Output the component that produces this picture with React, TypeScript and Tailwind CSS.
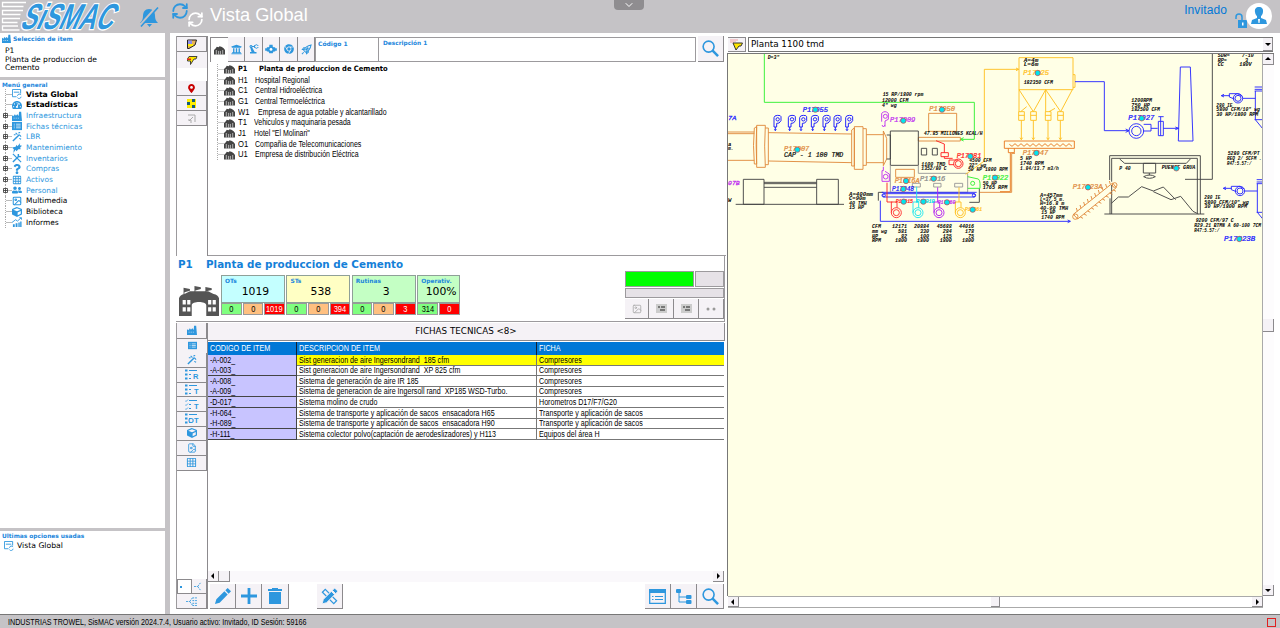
import React from "react";
import { FaUniversity, FaChrome, FaMapMarkerAlt, FaTachometerAlt, FaQuestion, FaUserFriends, FaCube } from "react-icons/fa";
import { MdPrecisionManufacturing, MdOutlineGridOn } from "react-icons/md";
import { RefreshCw, FileImage, Image as ImageIcon, ChevronDown } from "lucide-react";

const Factory = ({ className = "" }: { className?: string }) => (
  <svg viewBox="0 0 44 34" className={className} fill="currentColor" preserveAspectRatio="none">
    <path d="M0 34V14Q1 10 6 9L12 6H32L38 9q5 1 6 5v20H30V22c0-5-16-5-16 0v12z" />
    <path d="M5 2l7 1.500v2L6 7v3H5zM17 0l7 1.500v2L18 5v3h-1zM29 1l7 1.500v2L30 6v3h-1z" />
    <path fill="#fff" d="M4 16h3.500v5H4zM9 16h3.500v5H9zM4 24h3.500v5H4zM9 24h3.500v5H9zM32 16h3.500v5H32zM37 16h3.500v5H37zM32 24h3.500v5H32zM37 24h3.500v5H37z" />
  </svg>
);

const Building = () => (
  <svg viewBox="0 0 12 10" className="h-[10px] w-[11px] shrink-0">
    <path d="M0 10V5l2-2 1-1.500L5 2l1-1 2 .5L9 2l1.500 1L12 5v5z" fill="#444" />
    <path d="M2.500 5v5M5 6v4M7 6v4M9.500 5v5" stroke="#d8d8d8" strokeWidth=".8" />
  </svg>
);

const Plant = ({ className = "" }: { className?: string }) => (
  <svg viewBox="0 0 12 12" className={className} fill="currentColor">
    <path d="M0 12V6l1-1 1.500 1.500V5l1-1L5 6V5l1.500-1L8 6l.5-5H11l1 11z" />
    <path d="M2 8h1v1H2zM4.500 8h1v1h-1zM7 8h1v1H7z" fill="#fff" />
  </svg>
);

const Sheet = ({ className = "size-[10px]" }: { className?: string }) => (
  <svg viewBox="0 0 11 11" className={className}>
    <path d="M0 1h11v9H0z" fill="#2e97de" />
    <path d="M2 3.500h1M4.500 3.500h5M2 5.500h1M4.500 5.500h5M2 7.500h1M4.500 7.500h5" stroke="#fff" strokeWidth=".8" />
  </svg>
);

const Wand = () => (
  <svg viewBox="0 0 11 11" className="size-[10px]" stroke="#2e97de" fill="none">
    <path d="M1 10l7-7" strokeWidth="1.600" />
    <path d="M4 1l2 2M8 3l2 2M7 1l2-.5M2 3h2M8 7l2 1" strokeWidth="1.200" />
  </svg>
);

const Rocket = ({ className = "size-[11px]" }: { className?: string }) => (
  <svg viewBox="0 0 12 12" className={className} fill="none" stroke="#2e97de">
    <path d="M3 7q2-5 8-6-1 6-6 8zM3.500 6L1.500 6 3 4h2M6 8.500v2l2-1.500V7M3 9l-2 2" strokeWidth="1.100" />
    <path d="M5 7l3-3" strokeWidth="1.800" />
  </svg>
);

const Cross = () => (
  <svg viewBox="0 0 11 11" className="size-[10px]" stroke="#2e97de" fill="none">
    <path d="M1 1l9 9" strokeWidth="1.300" />
    <path d="M1 10l7-7M7 1v3h3" strokeWidth="1.600" />
  </svg>
);

const Wrench = () => (
  <svg viewBox="0 0 11 11" className="size-[10px]" fill="#2e97de">
    <path d="M0 5l4-1 1-2 1 1.500L9 0l-.5 2.500L11 3 9 5l.5 2L7 7 5 9 4 7.500 1.500 11 2 7z" />
  </svg>
);

const Report = () => (
  <svg viewBox="0 0 11 11" className="size-[10px]" fill="#2e97de">
    <path d="M1 8h2v3H1zM4 7h2v4H4zM7 6h1.500v5H7zM9 5h1.500v6H9z" />
    <path d="M0 6l4-3 2 1.500L10 1M8 .8h2.500V3" fill="none" stroke="#2e97de" />
  </svg>
);

const Glass = () => (
  <svg viewBox="0 0 18 18" className="size-[17px]" fill="none" stroke="#2e97de">
    <circle cx="7" cy="7" r="5.800" strokeWidth="1.700" />
    <path d="M11 11l6 6" strokeWidth="2.600" />
  </svg>
);

const Flags = ({ color }: { color: "yellow" | "mixed" }) => (
  <svg viewBox="0 0 12 10" className="h-[10px] w-3">
    {color === "mixed" ? (
      <g>
        <path d="M1.500 1h9L9 6 3 9.500H1.500z" fill="#e8b35a" stroke="#222" />
        <path d="M2 1.500h4V5H2z" fill="#8f8fe8" />
        <path d="M2 5h5v2H2z" fill="#ffee00" />
      </g>
    ) : (
      <g>
        <path d="M3 1.500h8L10 4H8L4.500 9.500V6H1.500V4z" fill="#ffe600" stroke="#333" strokeWidth=".9" />
        <path d="M1 3.500h4v1.500H1z" fill="#e02020" />
      </g>
    )}
  </svg>
);

const Pennant = () => (
  <svg viewBox="0 0 14 12" className="h-3 w-[14px]">
    <path d="M1 0v4M3 0v4M5 0v3M7 0v2" stroke="#f08080" strokeWidth=".7" />
    <path d="M3 4h9.500L11 7H9l-3 4z" fill="#ffe600" stroke="#333" />
  </svg>
);

const Arm = ({ className = "" }: { className?: string }) => (
  <svg viewBox="0 0 14 12" className={className} fill="currentColor">
    <path d="M0 5h2V4h2l1-1V1h4v2l1 1h2v1h2v3h-2v1h-2L9 11H5L4 9H2V8H0z" />
    <circle cx="7" cy="6.500" r="1.700" fill="#fff" />
  </svg>
);

const Dots = ({ letter = "", check = false }: { letter?: string; check?: boolean }) => (
  <svg viewBox="0 0 14 11" className="h-[11px] w-[14px]">
    <g stroke="#2e97de" fill="none">
      <path d="M4 1.500h8M4 5.500h2M4 9.500h2" />
      <path d={check ? "M0 1.500l1 1 2-2M0 5.500l1 1 2-2M0 9.500l1 1 2-2" : "M0 1.500h2.500M0 5.500h2.500M0 9.500h2.500"} strokeWidth={check ? 0.8 : 2} />
    </g>
    <text x="13.500" y="10" textAnchor="end" fontSize="7.500" fontWeight="bold" fontFamily="Liberation Sans" fill="#2e97de">{letter}</text>
  </svg>
);

const Btn = ({ children, className = "" }: { children?: React.ReactNode; className?: string }) => (
  <div className={"flex shrink-0 items-center justify-center border-r border-b border-[#8c8a8d] bg-[#f5f2f6] text-[#2e97de] " + className}>{children}</div>
);

function Monitor() {
  return (
    <svg viewBox="0 0 11 11" className="size-[10px]" fill="none" stroke="#2e97de">
      <path d="M5 8.500H.5v-8h9V5M2 3.500h6" />
      <path d="M6 7.500a2.200 2.200 0 0 1 4-1M10 8.500a2.200 2.200 0 0 1-4 1" />
    </svg>
  );
}

const menu: [string, React.ReactNode, number][] = [
  ["Vista Global", <Monitor key="a" />, 2],
  ["Estadísticas", <FaTachometerAlt key="b" />, 2],
  ["Infraestructura", <Plant key="c" className="size-[10px]" />, 1],
  ["Fichas técnicas", <Sheet key="d" />, 1],
  ["LBR", <Wand key="e" />, 1],
  ["Mantenimiento", <Wrench key="f" />, 1],
  ["Inventarios", <Cross key="g" />, 1],
  ["Compras", <FaQuestion key="h" />, 1],
  ["Activos", <MdOutlineGridOn key="i" />, 1],
  ["Personal", <FaUserFriends key="j" />, 1],
  ["Multimedia", <ImageIcon key="k" className="size-[10px]" strokeWidth={2.5} />, 0],
  ["Biblioteca", <FaCube key="l" />, 0],
  ["Informes", <Report key="m" />, 0],
];

const sites: [string, string, string][] = [
  ["P1", "Planta de produccion de Cemento", "w-[20.500px]"],
  ["H1", "Hospital Regional", "w-[17px]"],
  ["C1", "Central Hidroeléctrica", "w-[16.500px]"],
  ["G1", "Central Termoeléctrica", "w-[17px]"],
  ["W1", "Empresa de agua potable y alcantarillado", "w-[20px]"],
  ["T1", "Vehiculos y maquinaria pesada", "w-[16px]"],
  ["J1", "Hotel \"El Molinari\"", "w-[15.500px]"],
  ["O1", "Compañia de Telecomunicaciones", "w-[17px]"],
  ["U1", "Empresa de distribución Eléctrica", "w-[17px]"],
];

const rows = [
  ["-A-002_", "Sist generacion de aire Ingersondrand  185 cfm", "Compresores"],
  ["-A-003_", "Sist generacion de aire Ingersondrand  XP 825 cfm", "Compresores"],
  ["-A-008_", "Sistema de generación de aire IR 185", "Compresores"],
  ["-A-009_", "Sistema de generacion de aire Ingersoll rand  XP185 WSD-Turbo.", "Compresores"],
  ["-D-017_", "Sistema molino de crudo", "Horometros D17/F7/G20"],
  ["-H-064_", "Sistema de transporte y aplicación de sacos  ensacadora H65", "Transporte y aplicación de sacos"],
  ["-H-089_", "Sistema de transporte y aplicación de sacos  ensacadora H90", "Transporte y aplicación de sacos"],
  ["-H-111_", "Sistema colector polvo(captación de aerodeslizadores) y H113", "Equipos del área H"],
];

const cards: [string, string, string, string[], string][] = [
  ["OTs", "1019", "bg-[#c4ffff]", ["0", "0", "1019"], "w-[64px]"],
  ["STs", "538", "bg-[#ffffc4]", ["0", "0", "394"], "w-[64px]"],
  ["Rutinas", "3", "bg-[#c4ffc4]", ["0", "0", "3"], "w-[64px]"],
  ["Operativ.", "100%", "bg-[#c4ffc4]", ["314", "0"], "w-[43px]"],
];

const Note = ({ x, y, w, s = 15.5, c = "#000", t }: { x: number; y: number; w: number; s?: number; c?: string; t: string }) => (
  <text x={x} y={y} fontSize={s} fontStyle="italic" fontWeight="bold" textLength={w} lengthAdjust="spacingAndGlyphs" fill={c} className="whitespace-pre">{t}</text>
);

const Tag = ({ x, y, w, s = 19, c, t, px, py }: { x: number; y: number; w: number; s?: number; c: string; t: string; px: number; py: number }) => (
  <g>
    <text x={x} y={y} fontSize={s} fontStyle="italic" textLength={w} lengthAdjust="spacingAndGlyphs" fill={c} stroke={c} strokeWidth=".7">{t}</text>
    <circle cx={px} cy={py} r="8" fill="#00e5ee" stroke="#d83a3a" strokeWidth="2" />
  </g>
);

const Burner = ({ x }: { x: number }) => (
  <g stroke="#1414ff" fill="none">
    <circle cx={x + 3} cy="268" r="5" />
    <path d={`M${x - 8} 291v-28q1-7 11-7t10 4v12q-5 10-13 8v11zM${x - 4} 291v10M${x - 7} 298l3 4 3-4`} />
  </g>
);

const Fan = ({ x, c, top }: { x: number; c: string; top: number }) => (
  <g stroke={c} fill="none">
    <circle cx={x} cy="548" r="15" />
    <circle cx={x} cy="548" r="9" />
    <path d={`M${x - 15} 548v-32h17v17M${x - 4} 516V${top}`} />
  </g>
);

function Diagram() {
  const o = "#e08a3c";
  const y = "#ffc020";
  const b = "#2828ff";
  return (
    <svg viewBox="9 72 1602 1626" className="block h-[542px] w-[534px]" fontFamily="Liberation Mono, monospace" fill="none" strokeWidth="2.800">
      <path d="M118 72V217H748V328H706" stroke="#30f030" />
      <path d="M716 323l-10 5 10 5" stroke="#30f030" />
      <g stroke={o}>
        <path d="M9 306H88M9 311H88M9 391H88M130 308L380 312M130 393L380 398M424 314H475M424 398H475" />
        <path d="M88 294q-5 50 0 108h7q-3-60 0-112zM95 286h26q-4 62 0 126H95zM121 294h9v110h-9M380 300v108h8V294zM388 290h26v128h-26zM414 296h10v110h-10M475 303v104l10-20v-62z" />
        <path d="M611 250h84v54h-84zM580 322h126v11H580zM512 418h56v24h-56z" />
        <path d="M765 487h95V370h10" />
      </g>
      {[155, 198, 232, 267, 302, 335, 370].map((v) => <Burner key={v} x={v} />)}
      <g stroke="#444">
        <path d="M55 448h62v75H55zM275 448h65v75h-65zM117 457h158M117 461h158M117 472h158M32 523h325" />
        <path d="M496 303h84v103h-84zM485 315h11v72h-11M589 355h16v20h-16zM622 355h15v20h-15z" />
        <path d="M460 512V487h15M763 475v42h-30" />
      </g>
      <path d="M496 406v81h232v-57H580v-24M562 460h24v11h-24zM626 460h22v11h-22zM689 460h24v11h-24z" stroke="#999" />
      <g stroke="#c030f0">
        <circle cx="481" cy="259" r="6" /><path d="M470 275v-25q10-10 20 0v18l-10 5v17M471 285l4 6 5-6M475 410v12h-4v32h22v-22l-13-8" /><circle cx="482" cy="440" r="7" />
      </g>
      <path d="M633 332l25 10v26M648 368h22v12h-22zM658 380v5h25" stroke="#ff2020" />
      <circle cx="700" cy="401" r="14" stroke="#ff2020" /><circle cx="700" cy="401" r="9" stroke="#ff2020" /><path d="M672 390h28M672 390v14h15" stroke="#ff2020" />
      <path d="M728 440l32 7q5 4 5 13v15h-37" stroke="#30f030" /><circle cx="743" cy="460" r="6" stroke="#30f030" />
      <path d="M476 491h272q6 5 0 10H476q-6-5 0-10M470 487h285M466 512v62h570M1028 570l8 4-8 4" stroke={b} />
      <circle cx="476" cy="496" r="5" stroke={b} /><circle cx="747" cy="496" r="5" stroke={b} />
      <path d="M486 458v58h16" stroke="#ff2020" />
      <Fan x={514} c="#ff3030" top={516} />
      <Fan x={579} c="#20e5ee" top={470} />
      <Fan x={642} c="#b020f0" top={472} />
      <Fan x={706} c="#ffc020" top={472} />
      <path d="M722 433l56-40V118h103M873 114l8 4-8 4" stroke={y} />

      <Note x={128} y={88} w={35} t="D=3&quot;" />
      <Note x={473} y={197} w={122} t="15 RP/1800 rpm" /><Note x={471} y={217} w={79} t="12000 CFM" /><Note x={471} y={231} w={44} t='4" wg' />
      <Note x={597} y={316} w={176} t="47.85 MILLONES KCAL/H" />
      <Note x={589} y={407} w={72} t="1100 TMD" /><Note x={589} y={421} w={76} t="1352/80 C" />
      <Note x={733} y={395} w={67} t="4500 CFM" /><Note x={731} y={410} w={53} t='32" wg' /><Note x={729} y={424} w={119} t="50 HP 1800 RPM" />
      <Note x={773} y={464} w={43} t="50 HP" /><Note x={773} y={478} w={74} t="1765 RPM" />
      <Note x={372} y={497} w={72} t="A=400mm" /><Note x={372} y={510} w={50} t="C=90m" /><Note x={372} y={524} w={53} t="40 TMH" /><Note x={372} y={538} w={45} t="15 HP" />
      <text x="177" y="382" fontSize="19" fontStyle="italic" fill="#000" stroke="#000" strokeWidth=".5" textLength="178" lengthAdjust="spacingAndGlyphs">CAP - 1 100 TMD</text>
      <Note x={9} y={348} w={10} t="a" /><Note x={9} y={361} w={17} t="m." /><Note x={9} y={515} w={10} t="W" />
      <text x="9" y="269" fontSize="18" fontStyle="italic" fill={b} stroke={b} strokeWidth=".8" textLength="25" lengthAdjust="spacingAndGlyphs">7A</text>
      <text x="9" y="466" fontSize="18" fontStyle="italic" fill="#c030f0" stroke="#c030f0" strokeWidth=".8" textLength="35" lengthAdjust="spacingAndGlyphs">07B</text>
      {[["CFM", "12171", "20884", "45688", "44016"], ["mm wg", "581", "330", "284", "178"], ["HP", "82", "100", "125", "75"], ["RPM", "1800", "1800", "1800", "1800"]].map((r, i) => (
        <g key={r[0]} fontSize="15" fontWeight="bold" fontStyle="italic" fill="#000">
          <text x="441" y={595 + i * 14}>{r[0]}</text>
          {r.slice(1).map((v, j) => <text key={j} x={[546, 612, 680, 747][j]} y={595 + i * 14} textAnchor="end">{v}</text>)}
        </g>
      ))}
      <Tag x={233} y={247} w={76} c="#1414ff" t="P17055" px={271} py={239} />
      <Tag x={177} y={363} w={76} c={o} t="P17007" px={217} py={359} />
      <Tag x={495} y={275} w={76} c="#c030f0" t="P17009" px={535} py={272} />
      <Tag x={613} y={242} w={77} c={o} t="P17050" px={651} py={239} />
      <Tag x={695} y={384} w={74} c="#ff2020" t="P17081" px={736} py={379} />
      <Tag x={585} y={453} w={76} c="#888" t="P17016" px={626} py={446} />
      <Tag x={509} y={459} w={75} c={o} t="P1716A" px={543} py={453} />
      <Tag x={501} y={483} w={66} c="#1414ff" t="P17048" px={535} py={477} />
      <Tag x={773} y={449} w={77} c="#30f030" t="P17022" px={810} py={443} />
      <Tag x={512} y={519} w={52} s={14} c="#ff2020" t="P17015" px={536} py={515} />
      <Tag x={574} y={519} w={55} s={14} c="#00dce8" t="P17010" px={595} py={515} />
      <Tag x={638} y={521} w={53} s={14} c="#c030f0" t="P17060" px={666} py={517} />
      <Tag x={720} y={543} w={51} s={14} c={y} t="P17061" px={743} py={539} />

      <g transform="translate(825 0)">
        <g stroke={y}>
          <path d="M57 83h162v96H57zM219 134h6v38h-6M57 179v66M57 179l43 66 37-66 45 66 35-66M80 230l-18 15M165 235l-18 10M137 179v66" />
          {[64, 100, 144, 181].map((v) => <path key={v} d={`M${v - 8} 245h17v26h-17zM${v - 8} 256h17M${v} 271v58M${v - 4} 323l4 6 4-6`} />)}
        </g>
        <path d="M13 333h210v22H13zM25 355v13h6v117H0M43 355v13H31M28 343l8 6 9-8 9 8 9-8 9 8 9-8 9 8 9-8 9 8 9-8 9 8 9-8 9 8 9-8 9 8 9-8 9 8 9-8 9 8 9-8 9 8" stroke="#e87a20" />
        <g stroke={b}>
          <path d="M225 155h88v147h74M377 297l10 5-10 5M431 283h22v20h-24M453 295h20M475 274h15v43h-15zM482 260v57M475 260h16M490 295h46M526 291l10 4-10 4M541 111h30l8 222h-44z" />
          <circle cx="409" cy="303" r="22" /><circle cx="409" cy="303" r="14" />
        </g>
        <g stroke="#444">
          <path d="M637 72V448h-82M329 450v-73h272v175M335 455v-70h257v165M335 465v87M313 552h300M359 387l15 13h185l12-13M430 400h37v29h-37zM448 429v7M431 440q18-10 35 0-18 10-35 0" />
          <path d="M334 520l21-19h30l40-31 35 13 30-12 37 38M460 485l53 24 29-10 37 45 16 8M330 505v47" />
        </g>
        <g stroke={o}>
          <path d="M220 553L338 459l11 14L233 567z" /><circle cx="226" cy="560" r="8" /><circle cx="344" cy="465" r="7" />
          {Array.from({ length: 10 }, (_, i) => <path key={i} d={`M${232 + i * 11} ${544 - i * 9}l-3-10M${241 + i * 11} ${561 - i * 9}l8 4`} />)}
        </g>
        {[[0, 0], [6, 278]].map(([dx, dy]) => (
          <g key={dy} transform={`translate(${dx} ${dy})`} stroke={b}>
            <path d="M664 197h25M672 193l-8 4 8 4M688 191h25l14 8M688 191v10l15 6M728 205h38M764 171h25M764 178h25M766 183v86l22 27M764 183h25M764 269h25" />
            <circle cx="714" cy="205" r="14" /><circle cx="714" cy="205" r="9" />
          </g>
        ))}
        <Note x={71} y={97} w={44} t="A=4m" /><Note x={71} y={109} w={44} t="L=6m" /><Note x={71} y={162} w={88} t="182350 CFM" />
        <Note x={394} y={216} w={62} t="1200RPM" /><Note x={394} y={230} w={56} t="750 HP" /><Note x={394} y={244} w={86} t="182500 CFM" />
        <Note x={60} y={391} w={35} t="5 HP" /><Note x={60} y={405} w={71} t="1740 RPM" /><Note x={60} y={419} w={116} t="1.84/13.7 m3/h" />
        <Note x={120} y={500} w={67} t="A=457mm" /><Note x={120} y={513} w={74} t="L=37.5 m." /><Note x={120} y={526} w={73} t="H=16.8 m" /><Note x={120} y={540} w={84} t="40-90 TMH" /><Note x={124} y={553} w={42} t="15 HP" /><Note x={124} y={567} w={69} t="1740 RPM" />
        <Note x={358} y={420} w={34} t="P 40" /><Note x={485} y={416} w={101} t="PUENTE GRUA" />
        <Note x={653} y={82} w={108} t="SDR=    7-10" /><Note x={653} y={95} w={91} t="RP=      3" /><Note x={653} y={108} w={102} t="CC     180V" />
        <Note x={649} y={230} w={48} t="280 IE" /><Note x={649} y={244} w={131} t='5800 CFM/10" wg' /><Note x={649} y={257} w={126} t="30 HP/1800 RPM" />
        <Note x={683} y={374} w={96} t="5280 CFM/PT" /><Note x={681} y={391} w={104} t="REQ 2/ SCFM ." /><Note x={681} y={405} w={73} t="R47:5.57:/" />
        <Note x={613} y={508} w={48} t="280 IE" /><Note x={613} y={521} w={133} t='5800 CFM/10" wg' /><Note x={613} y={535} w={128} t="30 HP/1800 RPM" />
        <Note x={587} y={577} w={114} t="9200 CFM/97 C" /><Note x={583} y={592} w={200} t="R29.21 BTMN A 60-100 7CM" /><Note x={583} y={607} w={75} t="R47:5.57:/" />
        <Tag x={70} y={134} w={77} c={y} t="P17025" px={113} py={129} />
        <Tag x={68} y={374} w={77} c={o} t="P17047" px={109} py={369} />
        <Tag x={385} y={271} w={78} c="#1414ff" t="P17027" px={425} py={265} />
        <Tag x={218} y={477} w={90} c={o} t="P17023A" px={264} py={472} />
        <Tag x={672} y={633} w={94} c="#1414ff" t="P17023B" px={718} py={627} />
        <circle cx="529" cy="415" r="8" fill="#00e5ee" stroke="#d83a3a" strokeWidth="2" />
      </g>
    </svg>
  );
}

const ui = "font-['Liberation_Sans',sans-serif]";
const Arrow = ({ d }: { d: string }) => <svg viewBox="0 0 8 8" className="size-2 shrink-0"><path d={d} fill="#000" /></svg>;
const LEFT = "M2 4l3-3v6z";
const RIGHT = "M6 4L3 1v6z";
const UP = "M4 2l3 3H1z";
const DOWN = "M4 6l3-3H1z";

export default function App() {
  return (
    <div className="flex h-[628px] w-[1280px] flex-col overflow-hidden bg-[#c5c3c6] font-['DejaVu_Sans','Verdana',sans-serif] text-black">
      <header className="flex h-[33px] shrink-0 justify-between">
        <div className="flex">
          <svg viewBox="0 0 130 33" className="h-[33px] w-[130px] overflow-visible">
            <g fill="none" stroke="#fff" strokeWidth="1.300">
              <path d="M26 2.500H2.500v4h21M23 10.500H2.500v4h18M20 18.500H2.500v4h15M18 26h-15.500v4h17" />
            </g>
            <g transform="translate(17 29) skewX(-24)">
              <text x="2" y="0" fontFamily="Liberation Sans" fontWeight="bold" fontSize="36" textLength="92" lengthAdjust="spacingAndGlyphs" fill="#2e97de" stroke="#fff" strokeWidth="2.600" strokeLinejoin="miter" paintOrder="stroke">SiSMAC</text>
            </g>
          </svg>
          <svg viewBox="0 0 20 22" className="mt-[6px] ml-[9px] h-[22px] w-[20px]">
            <path d="M10 3c4 0 6 3 6 7 0 3 1 5 3 7H1c2-2 3-4 3-7 0-4 2-7 6-7zM8 18h5l-2.500 3z" fill="#2e97de" />
            <path d="M18 .5L1 19.500" stroke="#c5c3c6" strokeWidth="2.600" />
            <path d="M19 1.500L2 20.500" stroke="#2e97de" strokeWidth="1.600" />
          </svg>
          <RefreshCw className="mt-[2px] ml-[12px] size-[18px] text-[#2e97de]" strokeWidth={2.4} />
          <RefreshCw className="mt-[11px] -ml-[2px] size-[17px] text-white" strokeWidth={2.4} />
          <h1 className="mt-[3px] ml-[6px] font-['Liberation_Sans',sans-serif] text-[18.200px] leading-[24px] text-white">Vista Global</h1>
        </div>
        <div className="ml-[70px] flex h-[10px] w-[30px] items-center justify-center rounded-b-sm bg-[#8f8d90]"><ChevronDown className="size-3 text-white" /></div>
        <div className="flex w-[400px] justify-end pr-[8px]">
          <span className="mt-[3px] font-['Liberation_Sans',sans-serif] text-[12px] leading-[14px] tracking-[0.1px] text-[#0078d7]">Invitado</span>
          <svg viewBox="0 0 12 15" className="mt-[13px] ml-[8px] h-[15px] w-[12px]"><path d="M1 6V4a3 3 0 0 1 6 0v3" fill="none" stroke="#2e97de" strokeWidth="1.500" /><path d="M3 7h9v8H3z" fill="#2e97de" /><path d="M7 9.500h1.500v3H7z" fill="#fff" /></svg>
          <svg viewBox="0 0 26 26" className="mt-[3px] -ml-px size-[26px]"><circle cx="13" cy="13" r="13" fill="#fff" /><path d="M13 4c-3 0-4.500 2-4 5 .3 2 1 3.500 2 4v2l-5 2-1 4h16l-1-4-5-2v-2c1-.5 1.700-2 2-4 .5-3-1-5-4-5z" fill="#2e97de" /><path d="M12 16h2l-.5 4h-1z" fill="#fff" /></svg>
        </div>
      </header>

      <main className="flex h-[581px] shrink-0">
        <aside className="mr-[5px] flex w-[165px] flex-col gap-[3px]">
          <section className="h-[44px] bg-white">
            <div className="flex h-[10px] items-center pl-[2px] text-[6px] font-bold text-[#1b86dc]"><Plant className="mr-[2px] size-[9px] text-[#2e97de]" />Selección de item</div>
            <div className="pt-[4px] pl-[5px] text-[7.600px] leading-[8.700px]">P1<br />Planta de produccion de<br />Cemento</div>
          </section>
          <section className="h-[448px] bg-white">
            <div className="h-[9px] pl-[2px] text-[5.900px] leading-[10px] font-bold text-[#1b86dc]">Menú general</div>
            {menu.map(([label, icon, kind]) => (
              <div key={label} className="flex h-[10.670px] items-center">
                <span className="ml-[5px] flex h-full w-[7px] items-center border-l border-dotted border-[#aaa]">
                  {kind === 1 ? <svg viewBox="0 0 5 5" className="-ml-[3px] size-[5px] shrink-0"><path d="M.5.5h4v4h-4zM.5 2.500h4M2.500.5v4" stroke="#333" fill="#fff" strokeWidth=".8" /></svg> : null}
                  <i className="h-px flex-1 bg-[#bbb]" />
                </span>
                <span className="flex w-[14px] items-center text-[10px] text-[#2e97de]">{icon}</span>
                <span className={kind === 2 ? "text-[7.650px] font-bold" : kind === 1 ? "text-[7.450px] text-[#2e97de]" : "text-[7.450px]"}>{label}</span>
              </div>
            ))}
          </section>
          <section className="min-h-0 flex-1 bg-white">
            <div className="pt-px pl-[2px] text-[5.900px] leading-[9px] font-bold text-[#1b86dc]">Ultimas opciones usadas</div>
            <div className="flex items-center pl-[4px] text-[7.700px] leading-[10px]"><Monitor /><span className="ml-[3px]">Vista Global</span></div>
          </section>
        </aside>

        <div className="flex w-[557px] flex-col bg-white pl-[6px]">
          <section className="mt-[3px] flex h-[220px] w-[550px] border-l border-[#9c9a9d]">
            <div className="flex w-[31px] shrink-0 flex-col border-t border-r border-[#8c8a8d]">
              <Btn className="h-[15px]"><Flags color="mixed" /></Btn>
              <Btn className="h-[16px] !border-0"><Flags color="yellow" /></Btn>
              <div className="h-[13px]" />
              <Btn className="h-[15px]"><FaMapMarkerAlt className="size-[9px] text-[#c80000]" /></Btn>
              <Btn className="h-[15px]"><svg viewBox="0 0 9 9" className="size-[9px]"><path d="M0 0h9v9H0z" fill="#ffee00" /><path d="M5 0h3v3H5zM0 3h3v3H0zM5 6h3v3H5z" fill="#155a78" /></svg></Btn>
              <Btn className="h-[15px]"><svg viewBox="0 0 9 9" className="size-[9px]" fill="none" stroke="#aaa"><path d="M1 1h7v7M6 3L2 7M1 6h3v3" /></svg></Btn>
            </div>
            <div className="flex w-[518px] flex-col border-b border-[#9c9a9d]">
              <div className="flex h-[26px] w-[517px]">
                <div className="mt-px ml-[2px] flex h-[25px] w-[105px]">
                  <Btn className="w-[18px] border-t border-r-0 border-b-0 border-l bg-white"><Building /></Btn>
                  <Btn className="w-[17px] text-[11px]"><FaUniversity /></Btn>
                  <Btn className="w-[18px] text-[12px]"><MdPrecisionManufacturing /></Btn>
                  <Btn className="w-[17px]"><Arm className="h-[10px] w-[12px]" /></Btn>
                  <Btn className="w-[18px] text-[10px]"><FaChrome /></Btn>
                  <Btn className="w-[17px]"><Rocket /></Btn>
                </div>
                <div className="mt-px h-[25px] w-[64px] border border-[#9c9a9d] pl-[2px] text-[6px] leading-[11px] font-bold text-[#1b86dc]">Código 1</div>
                <div className="mt-px h-[25px] w-[317px] border border-l-0 border-[#9c9a9d] pl-[4px] text-[5.800px] leading-[11px] font-bold text-[#1b86dc]">Descripción 1</div>
                <Btn className="ml-[2px] w-[26px]"><Glass /></Btn>
              </div>
              <div className={"mt-[2px] ml-[9px] text-[8.500px] " + ui}>
                {sites.map(([code, name, w], i) => (
                  <div key={code} className="flex h-[10.670px] items-center whitespace-nowrap">
                    <span className="flex h-full w-[7px] items-center border-l border-dotted border-[#aaa]"><i className="h-px w-full bg-[#ccc]" /></span>
                    <Building />
                    <span className={"ml-[3px] shrink-0 " + w + (i === 0 ? " font-['DejaVu_Sans'] text-[7.300px] font-bold" : "")}><span className="inline-block origin-left scale-x-[0.900]">{code}</span></span>
                    <span className={i === 0 ? "origin-left scale-x-[0.925] font-['DejaVu_Sans'] text-[7.300px] font-bold" : "origin-left scale-x-[0.822]"}>{name}</span>
                  </div>
                ))}
              </div>
            </div>
          </section>

          <section className="h-[66px] w-[549px] border-r border-b border-[#9c9a9d]">
            <h2 className="flex h-[17px] items-center pl-[2px] text-[10.350px] font-bold text-[#1480d8]"><span className="w-[28px]">P1</span>Planta de produccion de Cemento</h2>
            <div className="flex">
              <Factory className="mt-[13px] ml-[3px] h-[30px] w-[40px] text-[#555]" />
              <div className="mt-[2px] ml-[2px] flex gap-[1.400px]">
                {cards.map(([title, num, bg, badges, w]) => (
                  <div key={title} className={w}>
                    <div className={"h-[28px] border border-[#8fa098] " + bg}>
                      <div className="pl-[3px] text-[5.900px] leading-[10px] font-bold text-[#1b86dc]">{title}</div>
                      <div className="pl-[5px] text-center text-[10.800px] leading-[12px]">{num}</div>
                    </div>
                    <div className="flex h-[12px] gap-px">
                      {badges.map((v, i) => (
                        <div key={i} className={"flex flex-1 basis-0 items-center justify-center border border-[#999] text-[8.300px] " + ui + (i === badges.length - 1 ? " bg-[#ff0000] text-white" : i === 0 ? " bg-[#80ff80]" : " bg-[#ffc080]")}><span className="scale-x-[0.900]">{v}</span></div>
                      ))}
                    </div>
                  </div>
                ))}
              </div>
              <div className="-mt-[2px] ml-auto flex w-[99px] flex-col">
                <div className="flex h-[16px] justify-between"><div className="w-[69px] border border-[#9c9a9d] bg-[#00ff00]" /><div className="w-[29px] border border-[#9c9a9d] bg-[#e6e2e7]" /></div>
                <div className="mt-[1px] h-[10px] border border-[#9c9a9d] bg-[#e6e2e7]" />
                <div className="mt-[1px] flex h-[20px]">
                  <Btn className="w-[24px] !text-[#aaa]"><ImageIcon className="size-[10px]" /></Btn>
                  <Btn className="w-[25px]"><svg viewBox="0 0 11 9" className="h-[9px] w-[11px]"><path d="M0 0h11v9H0z" fill="#ccc" /><path d="M2 2h2v2H2zM5 2h4v2H5zM4 5h5v2H4z" fill="#777" /></svg></Btn>
                  <Btn className="w-[25px]"><svg viewBox="0 0 11 9" className="h-[9px] w-[11px]"><path d="M0 0h11v9H0z" fill="#ccc" /><path d="M2 2h2v2H2zM5 2h4v2H5zM4 5h5v2H4z" fill="#777" /></svg></Btn>
                  <Btn className="w-[25px]"><svg viewBox="0 0 10 4" className="h-[4px] w-[10px]" fill="#999"><circle cx="2" cy="2" r="1.500" /><circle cx="8" cy="2" r="1.500" /></svg></Btn>
                </div>
              </div>
            </div>
          </section>

          <section className="mt-px flex h-[286px] w-[549px] border-l border-[#9c9a9d]">
            <div className="flex w-[31px] shrink-0 flex-col border-r border-[#8c8a8d]">
              <Btn className="h-[15.500px]"><Plant className="size-[10px]" /></Btn>
              <Btn className="h-[14.700px] !border-0"><Sheet className="size-[9px]" /></Btn>
              <Btn className="h-[14.700px]"><Wand /></Btn>
              <Btn className="h-[14.700px]"><Dots letter="R" /></Btn>
              <Btn className="h-[14.700px]"><Dots letter="T" /></Btn>
              <Btn className="h-[14.700px]"><Dots letter="T" check /></Btn>
              <Btn className="h-[14.700px]"><Dots letter="OT" /></Btn>
              <Btn className="h-[14.700px] text-[10px]"><FaCube /></Btn>
              <Btn className="h-[14.700px]"><FileImage className="size-[10px]" /></Btn>
              <Btn className="h-[14.700px] text-[11px]"><MdOutlineGridOn /></Btn>
              <div className="flex-1" />
              <div className="flex h-[15px]"><Btn className="w-[15px] border-t border-l bg-white"><i className="mr-2 size-[2px] bg-[#2e97de]" /></Btn><Btn className="flex-1"><Branch /></Btn></div>
              <Btn className="h-[15px]"><Branch wide /></Btn>
            </div>
            <div className="flex w-[517px] flex-col">
              <div className="flex h-[18px] items-center justify-center border-r border-b border-[#8c8a8d] bg-[#f5f2f6] text-[8.750px]">FICHAS TECNICAS &lt;8&gt;</div>
              <div className={"mt-px grid w-[516px] grid-cols-[88.500px_240px_1fr] bg-[#0078d7] text-[8.500px] leading-[12.500px] whitespace-nowrap text-white " + ui}>
                <span className="border-r border-[#123] pl-[2px]"><span className="inline-block origin-left scale-x-[0.845]">CODIGO DE ITEM</span></span>
                <span className="border-r border-[#123] pl-[2px]"><span className="inline-block origin-left scale-x-[0.845]">DESCRIPCION DE ITEM</span></span>
                <span className="pl-[2px]"><span className="inline-block origin-left scale-x-[0.845]">FICHA</span></span>
              </div>
              {rows.map((r, i) => (
                <div key={r[0]} className={"grid h-[10.670px] w-[516px] grid-cols-[88.500px_240px_1fr] text-[8.500px] leading-[10px] whitespace-pre " + ui + (i === 0 ? " bg-[#ffff00]" : "")}>
                  <span className="border-r border-b border-[#444] bg-[#c8c4ff] pl-[2px]"><span className="inline-block origin-left scale-x-[0.830]">{r[0]}</span></span>
                  <span className="border-r border-b border-[#777] pl-[2px]"><span className="inline-block origin-left scale-x-[0.838]">{r[1]}</span></span>
                  <span className="border-b border-[#777] pl-[2px]"><span className="inline-block origin-left scale-x-[0.838]">{r[2]}</span></span>
                </div>
              ))}
              <div className="flex-1" />
              <div className="flex h-[11px] w-[516px] justify-between bg-[#faf8fb]">
                <div className="flex"><Btn className="w-[11px]"><Arrow d={LEFT} /></Btn><Btn className="w-[11px]" /></div>
                <Btn className="w-[11px]"><Arrow d={RIGHT} /></Btn>
              </div>
              <div className="mt-[2px] flex h-[25px] w-[516px] pl-[2px]">
                <Btn className="w-[26px]"><Pencil /></Btn>
                <Btn className="w-[26px]"><svg viewBox="0 0 16 16" className="size-4"><path d="M8 0v16M0 8h16" stroke="currentColor" strokeWidth="2.800" /></svg></Btn>
                <Btn className="w-[27px]"><svg viewBox="0 0 14 16" className="h-4 w-[14px]" fill="currentColor"><path d="M0 1h4V0h6v1h4v2H0zM1 4h12v12H1z" /></svg></Btn>
                <Btn className="ml-[28px] w-[26px]"><Pencil cross /></Btn>
                <Btn className="ml-auto w-[26px]"><svg viewBox="0 0 17 15" className="h-[15px] w-[17px]" fill="none" stroke="currentColor"><path d="M.7.7h15.600v13.600H.7z" strokeWidth="1.300" /><path d="M0 2h17" strokeWidth="4" /><path d="M3 7.500h1.500M6 7.500h8M3 10.500h1.500M6 10.500h8" /></svg></Btn>
                <Btn className="w-[26px]"><svg viewBox="0 0 16 15" className="h-[15px] w-4" fill="currentColor"><rect width="5" height="4" rx="1" /><rect x="10" y="6" width="5.500" height="4" rx="1" /><rect x="10" y="11" width="5.500" height="4" rx="1" /><path d="M3 4v9h7M3 8h7" fill="none" stroke="currentColor" /></svg></Btn>
                <Btn className="w-[27px]"><Glass /></Btn>
              </div>
            </div>
          </section>
        </div>

        <div className="flex flex-1 flex-col bg-white pt-[4px]">
          <div className="flex h-[15px] w-[546px]">
            <Btn className="ml-px w-[18px] border-t"><Pennant /></Btn>
            <div className="ml-[2px] flex flex-1 items-center justify-between border border-r-0 border-[#777] pl-[2px] text-[8.800px]">Planta 1100 tmd<Btn className="h-full w-[10px]"><Arrow d={DOWN} /></Btn></div>
          </div>
          <div className="mt-px flex h-[543px] w-[547px] border-t border-l border-[#777]">
            <div className="w-[534px] bg-[#ffffe6]"><Diagram /></div>
            <div className="flex w-[12px] flex-col border-l border-[#aaa] bg-[#fdfcfd]">
              <Btn className="h-[11px]"><Arrow d={UP} /></Btn>
              <Btn className="mt-[254px] h-[13px]" />
              <Btn className="mt-auto h-[11px]"><Arrow d={DOWN} /></Btn>
            </div>
          </div>
          <div className="ml-px flex h-[12px] w-[535px] border-t border-b border-[#aaa]">
            <Btn className="w-[11px]"><Arrow d={LEFT} /></Btn>
            <Btn className="ml-[252px] w-[9px]" />
            <Btn className="ml-auto w-[11px]"><Arrow d={RIGHT} /></Btn>
          </div>
        </div>
      </main>

      <footer className={"flex h-[14px] shrink-0 items-center justify-between border-t border-[#777] pt-px pr-[4px] pl-[8px] text-[8.500px] whitespace-nowrap " + ui}>
        <span className="origin-left scale-x-[0.844]">INDUSTRIAS TROWEL, SisMAC versión 2024.7.4, Usuario activo: Invitado, ID Sesión: 59166</span>
        <i className="size-[9px] border border-[#e02020]" />
      </footer>
    </div>
  );
}

function Pencil({ cross = false }: { cross?: boolean }) {
  return (
    <svg viewBox="0 0 18 18" className="size-[17px]">
      {cross ? <path d="M1.500 4.500l3-3 12 12-3 3z" fill="none" stroke="#2e97de" strokeWidth="1.300" /> : null}
      <path d="M1 17l1.500-5L11 3.500 14.500 7 6 15.500zM12 2.500L14.500 0 18 3.500 15.500 6z" fill="#2e97de" stroke="#f5f2f6" strokeWidth={cross ? 1 : 0} />
    </svg>
  );
}

function Branch({ wide = false }: { wide?: boolean }) {
  return (
    <svg viewBox="0 0 12 10" className="h-[9px] w-[11px]" fill="none" stroke="#2e97de" strokeDasharray="2 1">
      <path d="M0 5h4M4 5l3-4M4 5l3 4" />
      {wide ? <path d="M7 1h5M7 4h5M7 7h5M7 9.500h5" /> : null}
    </svg>
  );
}
